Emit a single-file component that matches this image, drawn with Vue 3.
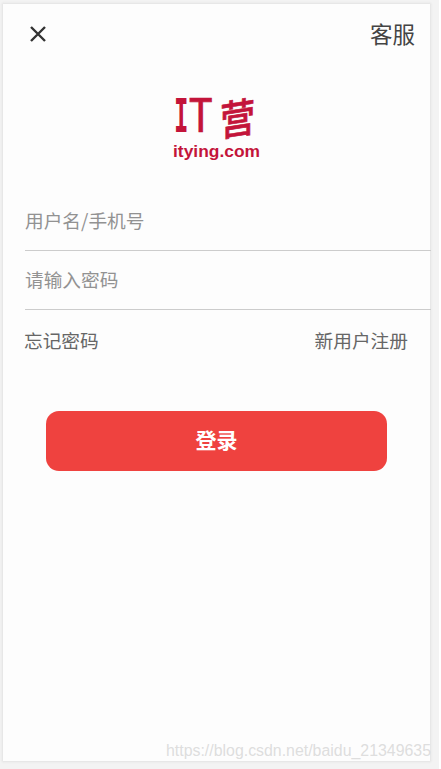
<script setup>
import { ref } from 'vue'

const username = ref('')
const password = ref('')
</script>

<template>
  <div class="page">
    <main class="screen">
      <header class="topbar">
        <svg class="close" viewBox="0 0 16 16" width="16" height="16">
          <path d="M1 1L15 15M15 1L1 15" />
        </svg>
        <span class="service">客服</span>
      </header>

      <svg class="logo" viewBox="0 0 100 80" width="100" height="80">
        <text class="latin heavy" x="7" y="46.5" textLength="14.5" lengthAdjust="spacingAndGlyphs">I</text>
        <text class="latin" x="21.9" y="46.5" textLength="23.5" lengthAdjust="spacingAndGlyphs">T</text>
        <text class="brush" transform="translate(53 51.5) skewY(-9) scale(.95 1.1)">营</text>
        <text class="domain" x="6" y="72" textLength="87" lengthAdjust="spacingAndGlyphs">itying.com</text>
      </svg>

      <form class="form" @submit.prevent>
        <input v-model="username" class="field" type="text" placeholder="用户名/手机号" />
        <input v-model="password" class="field" type="password" placeholder="请输入密码" />
        <div class="links">
          <span>忘记密码</span>
          <span>新用户注册</span>
        </div>
        <button class="submit" type="submit">登录</button>
      </form>
    </main>
    <div class="watermark">
      <svg width="268" height="22" viewBox="0 0 268 22">
        <text x="0" y="16" textLength="265" lengthAdjust="spacingAndGlyphs">https://blog.csdn.net/baidu_21349635</text>
      </svg>
    </div>
  </div>
</template>

<style>
body {
  margin: 0;
  background: #fff;
}
</style>

<style scoped>
.page {
  position: relative;
  box-sizing: border-box;
  width: 439px;
  height: 769px;
  padding: 4px 0 0 3px;
  overflow: hidden;
  background: #f3f3f3;
  font-family: "Noto Sans CJK SC", sans-serif;
}

.screen {
  width: 427px;
  height: 757px;
  background: #fdfdfd;
  box-shadow: 0 0 2px 1px #e2e2e2;
}

.topbar {
  display: flex;
  align-items: center;
  justify-content: space-between;
  height: 60px;
  padding: 0 15px 0 27px;
}

.close {
  fill: none;
  stroke: #333;
  stroke-width: 2.4;
}

.service {
  padding-bottom: 3px;
  font-size: 22.5px;
  line-height: 30px;
  color: #444;
}

.logo {
  display: block;
  margin: 21px 0 0 164px;
  overflow: visible;
  fill: #c3143a;
}

.latin {
  font: 46px "DejaVu Sans Mono", monospace;
  stroke: #c3143a;
  stroke-width: 0.7;
}

.latin.heavy {
  font-weight: 700;
  stroke-width: 0;
}

.brush {
  font: 500 37px "Noto Sans CJK SC", sans-serif;
  stroke: #c3143a;
  stroke-width: 0.6;
  stroke-linejoin: round;
}

.domain {
  font: 700 17px "Liberation Sans", sans-serif;
}

.form {
  padding-left: 22px;
  margin-top: 27px;
}

.field {
  display: block;
  box-sizing: border-box;
  width: 406px;
  height: 59px;
  padding: 0 0 4px;
  border: 0;
  border-bottom: 1px solid #ccc;
  outline: 0;
  background: transparent;
  font: 400 18.7px "Noto Sans CJK SC", sans-serif;
}

.field::placeholder {
  color: #929292;
  opacity: 1;
}

.links {
  display: flex;
  justify-content: space-between;
  height: 62px;
  padding-right: 22px;
  margin-left: -1px;
  font-size: 18.7px;
  line-height: 60px;
  color: #666;
}

.submit {
  display: block;
  width: 341px;
  height: 60px;
  padding: 0 0 5px;
  margin: 39px 0 0 21px;
  border: 0;
  border-radius: 13px;
  background: #ef423f;
  font: 700 21px "Noto Sans CJK SC", sans-serif;
  color: #fff;
}

.watermark {
  position: absolute;
  top: 740px;
  left: 166px;
  height: 22px;
}

.watermark text {
  font: 16px "Liberation Sans", sans-serif;
  fill: #dedede;
}
</style>
